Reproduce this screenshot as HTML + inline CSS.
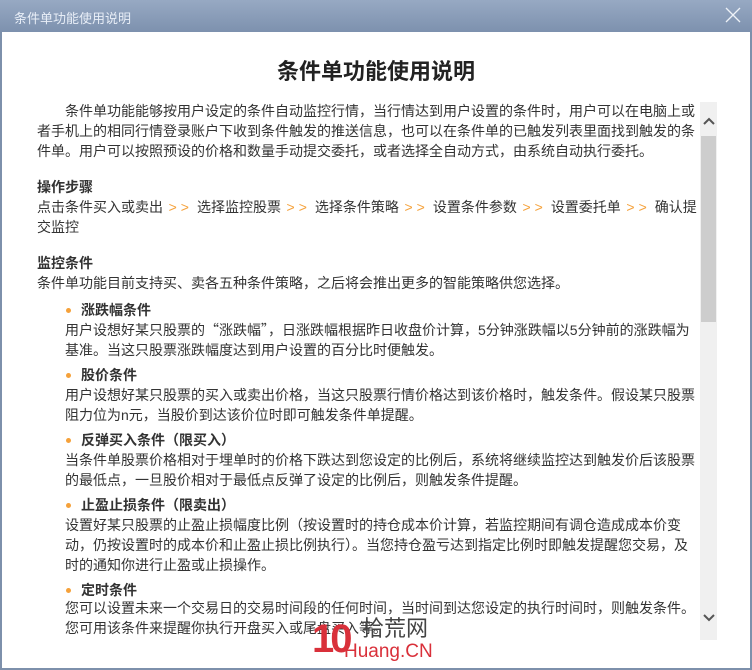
<!DOCTYPE html>
<html><head><meta charset="utf-8"><style>
*{margin:0;padding:0;box-sizing:border-box}
body{width:752px;height:670px;overflow:hidden;background:#fff;font-family:"Liberation Sans","Noto Sans CJK SC",sans-serif;position:relative}
.frame{position:absolute;inset:0;border:2px solid #7d90ab;border-top:none}
.tb{position:absolute;left:0;top:0;width:752px;height:32px;background:linear-gradient(#97a9c3,#7d91ae)}
.tb span{position:absolute;left:14px;top:8px;color:#e8eef7;font-size:13px}
.x{position:absolute;left:724px;top:6px}
.t{position:absolute;white-space:nowrap;font-size:14px;color:#333;line-height:20px}
.b{font-weight:bold}
.o{color:#f5a13a;padding:0 4px 0 5.6px;letter-spacing:4px}
.c{font-family:"Noto Sans CJK SC",sans-serif}
.h{position:absolute;left:0;width:752px;text-align:center;top:54px;font-size:22px;font-weight:bold;color:#222}
.dot{position:absolute;width:5px;height:5px;border-radius:50%;background:#f5a13a}
.sb{position:absolute;left:700px;top:102px;width:17px;height:538px;background:#f0f0f0}
.th{position:absolute;left:701px;top:136px;width:15px;height:186px;background:#cdcdcd}
</style></head><body>
<div class="tb"><span>条件单功能使用说明</span>
<svg class="x" width="18" height="18" viewBox="0 0 18 18"><path d="M2 2L16 16M16 2L2 16" stroke="#eef2f8" stroke-width="1.3"/></svg></div>
<div class="frame" style="top:32px"></div>
<div class="h">条件单功能使用说明</div>
<div class="sb"></div><div class="th"></div>
<svg style="position:absolute;left:703px;top:117px" width="12" height="10"><path d="M1 7L6 2L11 7" stroke="#555" stroke-width="2" fill="none"/></svg>
<svg style="position:absolute;left:703px;top:613px" width="12" height="10"><path d="M1 2L6 7L11 2" stroke="#555" stroke-width="2" fill="none"/></svg>

<div class="t" style="left:65px;top:101px">条件单功能能够按用户设定的条件自动监控行情，当行情达到用户设置的条件时，用户可以在电脑上或</div>
<div class="t" style="left:37px;top:121px">者手机上的相同行情登录账户下收到条件触发的推送信息，也可以在条件单的已触发列表里面找到触发的条</div>
<div class="t" style="left:37px;top:141px">件单。用户可以按照预设的价格和数量手动提交委托，或者选择全自动方式，由系统自动执行委托。</div>
<div class="t b" style="left:37px;top:177px">操作步骤</div>
<div class="t" style="left:37px;top:197px">点击条件买入或卖出<span class="o">&gt;&gt;</span>选择监控股票<span class="o">&gt;&gt;</span>选择条件策略<span class="o">&gt;&gt;</span>设置条件参数<span class="o">&gt;&gt;</span>设置委托单<span class="o">&gt;&gt;</span>确认提</div>
<div class="t" style="left:37px;top:217px">交监控</div>
<div class="t b" style="left:37px;top:253px">监控条件</div>
<div class="t" style="left:37px;top:273px">条件单功能目前支持买、卖各五种条件策略，之后将会推出更多的智能策略供您选择。</div>

<div class="dot" style="left:66px;top:308px"></div>
<div class="t b" style="left:81px;top:300px">涨跌幅条件</div>
<div class="t" style="left:65px;top:320px">用户设想好某只股票的<span class="c">“</span>涨跌幅<span class="c">”</span>，日涨跌幅根据昨日收盘价计算，5分钟涨跌幅以5分钟前的涨跌幅为</div>
<div class="t" style="left:65px;top:340px">基准。当这只股票涨跌幅度达到用户设置的百分比时便触发。</div>

<div class="dot" style="left:66px;top:373px"></div>
<div class="t b" style="left:81px;top:365px">股价条件</div>
<div class="t" style="left:65px;top:385px">用户设想好某只股票的买入或卖出价格，当这只股票行情价格达到该价格时，触发条件。假设某只股票</div>
<div class="t" style="left:65px;top:405px">阻力位为n元，当股价到达该价位时即可触发条件单提醒。</div>

<div class="dot" style="left:66px;top:438px"></div>
<div class="t b" style="left:81px;top:430px">反弹买入条件（限买入）</div>
<div class="t" style="left:65px;top:450px">当条件单股票价格相对于埋单时的价格下跌达到您设定的比例后，系统将继续监控达到触发价后该股票</div>
<div class="t" style="left:65px;top:470px">的最低点，一旦股价相对于最低点反弹了设定的比例后，则触发条件提醒。</div>

<div class="dot" style="left:66px;top:503px"></div>
<div class="t b" style="left:81px;top:495px">止盈止损条件（限卖出）</div>
<div class="t" style="left:65px;top:515px">设置好某只股票的止盈止损幅度比例（按设置时的持仓成本价计算，若监控期间有调仓造成成本价变</div>
<div class="t" style="left:65px;top:535px">动，仍按设置时的成本价和止盈止损比例执行）。当您持仓盈亏达到指定比例时即触发提醒您交易，及</div>
<div class="t" style="left:65px;top:555px">时的通知你进行止盈或止损操作。</div>

<div class="dot" style="left:66px;top:588px"></div>
<div class="t b" style="left:81px;top:580px">定时条件</div>
<div class="t" style="left:65px;top:598px">您可以设置未来一个交易日的交易时间段的任何时间，当时间到达您设定的执行时间时，则触发条件。</div>
<div class="t" style="left:65px;top:618px">您可用该条件来提醒你执行开盘买入或尾盘买入等。</div>

<div style="position:absolute;left:312px;top:617px;font-size:40px;font-weight:bold;color:#d9303a;letter-spacing:-4px;font-family:'Liberation Sans Narrow','Liberation Sans',sans-serif">10</div>
<div style="position:absolute;left:362px;top:617px;font-size:22px;color:#444;line-height:24px;font-family:'Liberation Sans','Noto Sans CJK SC',sans-serif">拾荒网</div>
<div style="position:absolute;left:344px;top:641px;font-size:19px;color:#d9303a;line-height:22px;font-family:'Liberation Sans Narrow','Liberation Sans',sans-serif">Huang.CN</div>
</body></html>
